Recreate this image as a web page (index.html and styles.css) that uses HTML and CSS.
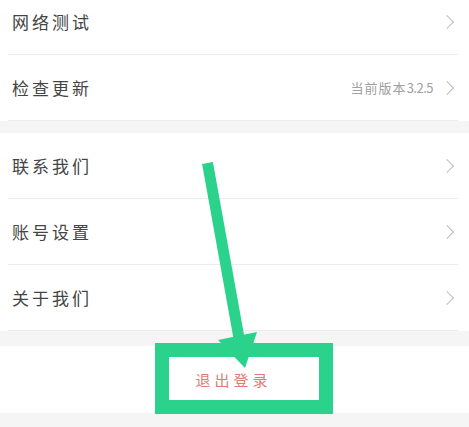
FILE: index.html
```html
<!DOCTYPE html>
<html lang="zh">
<head>
<meta charset="utf-8">
<link rel="stylesheet" href="styles.css">
</head>
<body>
<div class="page">
  <div class="group first">
    <div class="row"><span class="label">网络测试</span><span class="right"><span class="chev"></span></span></div>
    <div class="row"><span class="label">检查更新</span><span class="right"><span class="ver">当前版本<span class="num">3.2.5</span></span><span class="chev"></span></span></div>
  </div>
  <div class="group">
    <div class="row"><span class="label">联系我们</span><span class="right"><span class="chev"></span></span></div>
    <div class="row"><span class="label">账号设置</span><span class="right"><span class="chev"></span></span></div>
    <div class="row"><span class="label">关于我们</span><span class="right"><span class="chev"></span></span></div>
  </div>
  <div class="logout">退出登录</div>
</div>
<svg class="overlay" width="469" height="427" viewBox="0 0 469 427">
  <line x1="207.5" y1="163" x2="239" y2="338" stroke="#2ad28b" stroke-width="11"/>
  <polygon points="218,340 257,332 245,368" fill="#2ad28b"/>
  <rect x="162" y="350" width="164" height="57" fill="none" stroke="#2ad28b" stroke-width="14"/>
</svg>
</body>
</html>
```
FILE: styles.css
```css
html, body {
  margin: 0;
  padding: 0;
}
body {
  width: 469px;
  height: 427px;
  overflow: hidden;
  background: #f5f5f5;
  font-family: "Noto Sans CJK SC", "Noto Sans", sans-serif;
  position: relative;
}
.page {
  display: flex;
  flex-direction: column;
}
.group {
  background: #fff;
  display: flex;
  flex-direction: column;
  margin-bottom: 12px;
}
.group.first {
  margin-top: -11px;
}
.group + .group {
  margin-bottom: 15px;
}
.row {
  height: 65px;
  display: flex;
  align-items: center;
  justify-content: space-between;
  padding: 0 12px;
  position: relative;
  border-bottom: 1px solid transparent;
}
.row::after {
  content: "";
  position: absolute;
  left: 8px;
  right: 11px;
  bottom: -1px;
  height: 1px;
  background: #ececec;
}
.label {
  font-size: 17px;
  letter-spacing: 3px;
  color: #444444;
}
.right {
  display: flex;
  align-items: center;
  gap: 9px;
}
.ver {
  font-size: 13px;
  letter-spacing: 1px;
  color: #a0a0a0;
}
.num {
  letter-spacing: -0.5px;
}
.chev {
  width: 9px;
  height: 9px;
  border-right: 1.5px solid #bdbdbd;
  border-top: 1.5px solid #bdbdbd;
  transform: rotate(45deg);
  margin-right: 5px;
}
.logout {
  background: #fff;
  height: 67px;
  display: flex;
  align-items: center;
  justify-content: center;
  font-size: 15px;
  letter-spacing: 4px;
  color: #df7b70;
  padding-right: 2px;
  box-sizing: border-box;
  width: 469px;
}
.overlay {
  position: absolute;
  left: 0;
  top: 0;
  pointer-events: none;
}
```
